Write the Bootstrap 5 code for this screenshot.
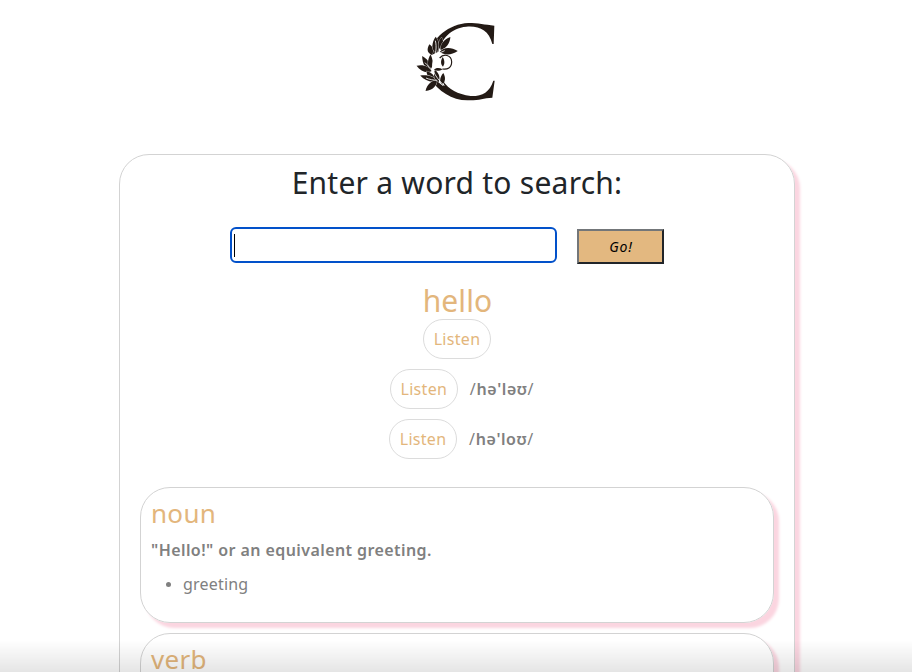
<!DOCTYPE html>
<html lang="en">
<head>
<meta charset="utf-8">
<meta name="viewport" content="width=device-width, initial-scale=1">
<title>Dictionary</title>
<link href="https://cdn.jsdelivr.net/npm/bootstrap@5.3.0/dist/css/bootstrap.min.css" rel="stylesheet">
<style>
body{font-family:"Noto Sans","Open Sans",sans-serif;color:#212529;background:#fff;height:672px;overflow:hidden}
.logo{display:block;width:100px;height:100px;margin:10px 0 44px 405px}
.panel{width:676px;margin-left:119px;height:700px;border:1px solid #d3d3d3;border-radius:30px;padding:10px 20px;box-shadow:5px 5px 3px -.5px #fbd5e0}
.prompt{font-size:30px;line-height:36px;letter-spacing:.24px;margin:0 0 26px 0;font-weight:400}
.search-row{height:36px;margin-left:90px}
.word-input{width:327px;height:36px;border:2px solid #0251ca;border-radius:6px;padding:0 2px;outline:0}
.caret{width:1px;height:23px;background:#000}
.go{width:87px;height:35px;margin:2px 0 0 20px;border:2px solid;border-color:#737679 #212529 #212529 #737679;background:#e3b880;font-size:14px;letter-spacing:.8px;font-style:italic;color:#000;padding:0 0 0 1px;border-radius:0}
.gold{color:#e3b67c;font-weight:400}
.headword{font-size:30px;line-height:36px;letter-spacing:.1px;margin:20px 0 0;padding-left:1px}
.listen{display:inline-flex;align-items:center;justify-content:center;width:68px;height:40px;border:1px solid #dcdcdc;border-radius:20px;color:#e3b67c;font-size:16px;letter-spacing:.3px;text-decoration:none}
.phon{color:#808080;height:40px;margin-bottom:10px;font-size:16px}
.phon-us{padding-left:10px}
.phon-uk{padding-left:9px}
.ipa{margin-left:12px;letter-spacing:.6px}
.ipa b,.definition{font-weight:600}
.meaning{border:1px solid #d3d3d3;border-radius:30px;height:136px;padding:8px 10px;margin-bottom:10px;box-shadow:5px 5px 3px -.5px #fbd5e0;color:#808080}
.meaning-first{margin-top:28px}
.pos{font-size:26px;line-height:34px;letter-spacing:.3px;margin:0 0 8px}
.definition{font-size:16px;line-height:24px;margin:0 0 10px;letter-spacing:.42px}
.syn{font-size:16px;line-height:24px;letter-spacing:.2px;padding-left:32px;margin:0}
.syn li::marker{font-size:14px}
.fade-edge{height:32px;background:linear-gradient(rgba(0,0,0,0),rgba(0,0,0,.1));pointer-events:none}
</style>
</head>
<body>
<svg class="logo" viewBox="0 0 300 300" fill="#231a15">
<defs><path id="leaf" d="M0 0C7-12 20-12 32 0C20 11 8 9 0 0Z"/></defs>
<path d="M268 47C240 44 219 39 190 39C132 42 80 83 72 139L100 125C108 89 137 54 184 50C223 47 251 60 262 102H266ZM75 207C101 243 141 272 190 271C222 272 234 264 262 263L269 212H265C253 247 232 259 197 258C157 252 132 239 114 212Z"/>
<path d="M91 88C67 112 66 135 84 155C76 179 85 203 116 225" fill="none" stroke="#fff" stroke-width="7"/>
<g stroke="#fff" stroke-width="1.5" paint-order="stroke">
<use href="#leaf" transform="translate(80 134) rotate(-102) scale(1 1)"/>
<use href="#leaf" transform="translate(93 130) rotate(-91) scale(1.55 1.15)"/>
<use href="#leaf" transform="translate(107 120) rotate(-86) scale(1.2 .8)"/>
<use href="#leaf" transform="translate(108 120) rotate(-54) scale(1.5 1)"/>
<use href="#leaf" transform="translate(104 126) rotate(-3) scale(1.7 1.15)"/>
<use href="#leaf" transform="translate(78 182) rotate(-121) scale(1.6 1)"/>
<use href="#leaf" transform="translate(77 178) rotate(-91) scale(1.4 .85)"/>
<use href="#leaf" transform="translate(80 183) rotate(-161) scale(1.5 1.05)"/>
<use href="#leaf" transform="translate(90 210) rotate(-134) scale(1.15 .9)"/>
<use href="#leaf" transform="translate(96 212) rotate(-163) scale(1.65 .95)"/>
<use href="#leaf" transform="translate(95 211) rotate(136) scale(1.45 1.1)"/>
<use href="#leaf" transform="translate(101 216) rotate(-107) scale(1.2 .9)"/>
<use href="#leaf" transform="translate(112 224) rotate(-85) scale(1.1 .85)"/>
<use href="#leaf" transform="translate(87 179) rotate(-3) scale(.8 .5)"/>
<use href="#leaf" transform="translate(114 170) rotate(-92) scale(.9 .6)"/>
</g>
<path d="M104 144C116 130 139 134 140 155C140 174 127 179 112 177" fill="none" stroke="#231a15" stroke-width="3.5"/>
<path d="M91 92C96 112 92 130 86 151C77 171 84 195 118 227M87 149C94 136 103 128 119 122M81 182C76 171 67 167 60 158M97 211C84 210 74 209 63 204" fill="none" stroke="#fff" stroke-width="2.5"/>
</svg>
<main class="panel">
<h1 class="prompt text-center">Enter a word to search:</h1>
<div class="search-row d-flex align-items-start">
<div class="word-input d-flex align-items-center" role="textbox" aria-label="Word"><span class="caret"></span></div>
<button class="go" type="button">Go!</button>
</div>
<h2 class="headword gold text-center">hello</h2>
<div class="phon d-flex justify-content-center"><a class="listen">Listen</a></div>
<div class="phon phon-us d-flex justify-content-center align-items-center"><a class="listen">Listen</a><span class="ipa">/<b>hə'ləʊ</b>/</span></div>
<div class="phon phon-uk d-flex justify-content-center align-items-center"><a class="listen">Listen</a><span class="ipa">/<b>hə'loʊ</b>/</span></div>
<section class="meaning meaning-first"><h3 class="pos gold">noun</h3><p class="definition">"Hello!" or an equivalent greeting.</p><ul class="syn"><li>greeting</li></ul></section>
<section class="meaning"><h3 class="pos gold">verb</h3></section>
</main>
<div class="fade-edge fixed-bottom"></div>
<script src="https://cdn.jsdelivr.net/npm/bootstrap@5.3.0/dist/js/bootstrap.bundle.min.js"></script>
</body>
</html>
